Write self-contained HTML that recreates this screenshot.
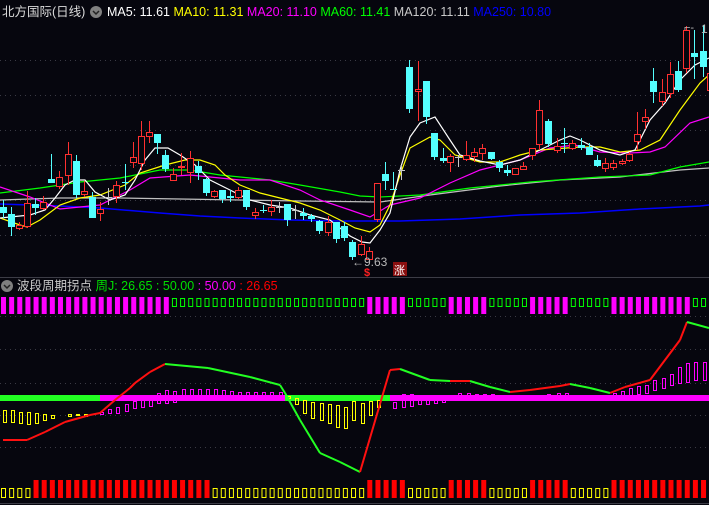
<!DOCTYPE html>
<html><head><meta charset="utf-8"><style>
html,body{margin:0;padding:0;background:#06060e;width:709px;height:505px;overflow:hidden}
svg{display:block}
text{font-family:"Liberation Sans","Noto Sans CJK SC",sans-serif}
</style></head><body>
<svg id="s" width="709" height="505" xmlns="http://www.w3.org/2000/svg">
<rect width="709" height="505" fill="#06060e"/>
<g id="grid" stroke="#3a3a44" stroke-dasharray="1 4" stroke-width="1"></g>
<line x1="0" y1="277.5" x2="709" y2="277.5" stroke="#3c3c46"/>
<line x1="0" y1="503.5" x2="709" y2="503.5" stroke="#3c3c46"/>
<g id="ma" fill="none" stroke-width="1.2"></g>
<g id="cd"></g>
<g id="low"></g>
<text x="352" y="266" fill="#b8b8b8" font-size="12">←9.63</text>
<text x="364" y="276" fill="#ff2020" font-size="11" font-weight="bold">$</text>
<rect x="393" y="262" width="14" height="14" fill="#8a1010"/>
<text x="394" y="274" fill="#fff" font-size="11">涨</text>
<text x="684" y="31" fill="#b8b8b8" font-size="11">⌐-</text>
<text x="701" y="33" fill="#b8b8b8" font-size="12">1</text>
<rect x="0" y="0" width="709" height="22" fill="#06060e"/>
<text x="2" y="16" font-size="12.5" fill="#dcdcdc">北方国际(日线)</text>
<circle cx="96" cy="12" r="6" fill="#808080"/><path d="M93 11 L96 14 L99 11" stroke="#222" stroke-width="1.5" fill="none"/>
<text x="107" y="16" font-size="12.5"><tspan fill="#ffffff">MA5: 11.61 </tspan><tspan fill="#ffff00">MA10: 11.31 </tspan><tspan fill="#ff00ff">MA20: 11.10 </tspan><tspan fill="#00ff00">MA60: 11.41 </tspan><tspan fill="#c8c8c8">MA120: 11.11 </tspan><tspan fill="#0000ff">MA250: 10.80</tspan></text>
<circle cx="7" cy="286" r="6" fill="#808080"/><path d="M4 285 L7 288 L10 285" stroke="#222" stroke-width="1.5" fill="none"/>
<text x="17" y="290" font-size="12.5"><tspan fill="#c8c8c8">波段周期拐点 </tspan><tspan fill="#00e000">周J: 26.65 : 50.00 </tspan><tspan fill="#ff00ff">: 50.00 </tspan><tspan fill="#ff0000">: 26.65</tspan></text>
</svg>
<script>
(function(){
var NS="http://www.w3.org/2000/svg";
function el(p,t,a){var e=document.createElementNS(NS,t);for(var k in a)e.setAttribute(k,a[k]);document.getElementById(p).appendChild(e);return e;}
[60,95,130,165,200,235,316,349,383,415,447].forEach(function(y){el("grid","line",{x1:0,y1:y+.5,x2:709,y2:y+.5});});
function pl(g,pts,c,w){el(g,"polyline",{points:pts.map(function(p){return p.join(",")}).join(" "),stroke:c,"stroke-width":w||1.2,fill:"none"});}
pl("ma",[[0,204],[60,206],[100,208],[160,213],[200,216],[240,218],[290,220],[340,221],[400,221],[460,219],[520,215],[580,213],[640,209],[700,206],[709,205]],"#0000ff",1.5);
pl("ma",[[0,200],[60,198],[120,198],[180,199],[240,200],[300,201],[380,202],[430,195],[500,186],[560,180],[620,177],[680,170],[709,168]],"#c0c0c0");
pl("ma",[[0,193],[40,188],[80,182],[120,178],[160,170],[190,170],[220,175],[270,180],[300,185],[340,192],[360,196],[380,197],[420,195],[470,188],[530,182],[600,177],[650,175],[680,167],[709,162]],"#00ff00");
pl("ma",[[0,187],[30,197],[60,209],[100,205],[130,190],[150,178],[190,175],[240,180],[270,180],[300,190],[320,200],[350,210],[370,217],[390,205],[420,198],[450,183],[480,170],[520,160],[550,148],[575,145],[600,152],[630,153],[650,152],[665,147],[690,123],[709,117]],"#ff00ff");
pl("ma",[[0,218],[20,225],[27,227],[40,220],[60,205],[80,198],[100,195],[125,185],[140,173],[165,165],[185,160],[200,160],[215,165],[225,175],[240,185],[260,193],[280,198],[300,203],[320,210],[340,220],[355,228],[370,232],[380,225],[390,205],[400,175],[410,148],[430,137],[440,140],[455,155],[480,162],[500,162],[520,155],[540,150],[580,147],[600,147],[620,152],[640,150],[660,140],[680,110],[700,83],[709,75]],"#ffff00");
pl("ma",[[0,218],[30,215],[45,210],[55,198],[65,185],[75,180],[85,180],[95,192],[110,200],[125,195],[135,180],[145,160],[155,148],[168,148],[180,155],[195,165],[210,180],[230,190],[250,200],[270,205],[290,208],[310,215],[330,220],[350,236],[362,242],[370,243],[380,230],[390,213],[400,170],[410,137],[420,123],[435,117],[450,140],[460,155],[480,161],[500,165],[520,160],[540,150],[560,140],[570,136],[580,140],[600,150],[620,155],[635,150],[650,120],[665,103],[680,80],[695,65],[709,58]],"#ffffff");
var C=[[3,207,213,200,218,"c"],[11,214,227,207,236,"c"],[19,225,228,222,230,"r"],[27,203,226,191,228,"r"],[35,204,208,198,215,"c"],[43,202,208,196,210,"r"],[51,179,183,154,183,"c"],[59,177,186,171,189,"r"],[68,154,175,142,185,"r"],[76,161,195,155,198,"c"],[84,191,194,181,197,"r"],[92,197,218,192,218,"c"],[100,209,213,202,221,"r"],[108,197,198,188,205,"x"],[116,185,196,181,203,"r"],[125,182,183,164,190,"c"],[133,157,162,142,168,"r"],[141,136,163,121,170,"r"],[149,132,136,121,143,"r"],[157,134,143,134,154,"c"],[165,155,169,150,172,"c"],[173,174,180,168,181,"r"],[181,166,167,153,175,"r"],[190,158,172,151,183,"r"],[198,166,173,161,180,"c"],[206,179,193,178,196,"c"],[214,191,196,190,198,"r"],[222,190,199,190,203,"c"],[230,196,198,190,202,"c"],[238,190,197,187,199,"r"],[246,190,207,190,210,"c"],[255,212,215,208,219,"r"],[263,210,211,205,213,"c"],[271,207,211,200,216,"r"],[279,207,208,202,213,"x"],[287,204,220,204,226,"c"],[295,210,211,205,219,"x"],[303,213,216,208,220,"c"],[311,216,219,214,222,"c"],[319,221,231,220,234,"c"],[328,222,232,216,236,"r"],[336,222,239,222,243,"c"],[344,226,238,222,241,"c"],[352,242,257,240,260,"c"],[361,244,254,236,256,"r"],[369,251,259,247,262,"r"],[377,183,219,183,222,"r"],[385,174,181,162,190,"c"],[393,189,190,172,190,"c"],[401,170,171,165,180,"x"],[409,67,109,60,113,"c"],[418,89,91,61,121,"r"],[426,81,117,81,124,"c"],[434,133,157,133,160,"c"],[443,158,161,148,163,"c"],[450,156,162,154,172,"r"],[458,157,158,155,167,"x"],[466,155,159,141,161,"r"],[474,152,156,148,162,"r"],[482,148,153,144,160,"r"],[491,152,159,152,160,"c"],[499,162,168,160,172,"c"],[507,170,173,165,176,"c"],[515,168,174,168,175,"r"],[523,166,169,162,170,"r"],[532,148,155,148,160,"r"],[539,110,144,100,150,"r"],[548,121,144,119,147,"c"],[557,146,150,138,153,"r"],[564,143,144,128,153,"c"],[572,143,148,140,150,"r"],[581,145,148,138,150,"c"],[589,147,155,143,155,"c"],[597,160,166,155,167,"c"],[605,163,168,158,172,"r"],[613,163,167,160,170,"r"],[622,161,163,159,165,"r"],[629,154,160,152,162,"r"],[637,134,141,112,150,"r"],[645,117,121,109,129,"r"],[653,81,92,68,103,"c"],[662,92,101,79,106,"r"],[670,74,93,62,98,"r"],[678,71,90,61,92,"c"],[686,30,68,26,73,"r"],[694,53,57,30,79,"c"],[703,51,67,25,77,"c"],[710,73,90,66,95,"r"]];
C.forEach(function(c){var x=c[0],col=c[5]=="r"?"#ff3030":c[5]=="c"?"#54ffff":"#c8c8c8";
el("cd","line",{x1:x+.5,y1:c[3],x2:x+.5,y2:c[4],stroke:col});
if(c[5]=="r")el("cd","rect",{x:x-2.5,y:c[1]+.5,width:6,height:Math.max(1,c[2]-c[1]),fill:"#06060e",stroke:col});
else if(c[5]=="c")el("cd","rect",{x:x-3,y:c[1],width:7,height:Math.max(1,c[2]-c[1]),fill:col});
else el("cd","line",{x1:x-3,y1:c[1]+.5,x2:x+4,y2:c[1]+.5,stroke:col});});
function seg(i,arr){for(var k=0;k<arr.length;k++)if(i<=arr[k][0])return arr[k][1];return arr[arr.length-1][1];}
var topRow=[[20,1],[44,0],[49,1],[54,0],[59,1],[64,0],[69,1],[74,0],[84,1],[99,0]];
var botRow=[[3,0],[25,1],[44,0],[49,1],[54,0],[59,1],[64,0],[69,1],[74,0],[99,1]];
for(var i=0;i<88;i++){var x=1+i*8.14;
 if(seg(i,topRow))el("low","rect",{x:x,y:297,width:5,height:17,fill:"#ff00ff"});
 else el("low","rect",{x:x+.5,y:298.5,width:4,height:8,fill:"none",stroke:"#00ff00"});
 if(seg(i,botRow))el("low","rect",{x:x,y:480,width:5,height:18,fill:"#ff0000"});
 else el("low","rect",{x:x+.5,y:488.5,width:4,height:9,fill:"none",stroke:"#ffff00"});}
el("low","rect",{x:0,y:395,width:100,height:6,fill:"#22ff22"});
el("low","rect",{x:100,y:395,width:185,height:6,fill:"#ff00ff"});
el("low","rect",{x:285,y:395,width:105,height:6,fill:"#22ff22"});
el("low","rect",{x:390,y:395,width:319,height:6,fill:"#ff00ff"});
var H=[[3,410,422,"y"],[11,410,422,"y"],[19,412,423,"y"],[27,412,424,"y"],[35,413,423,"y"],[43,414,420,"y"],[51,415,418,"y"],[68,414,416,"y"],[76,414,415,"y"],[84,414,416,"y"],
[100,412,414,"m"],[108,409,413,"m"],[116,407,413,"m"],[125,404,411,"m"],[133,401,408,"m"],[141,398,407,"m"],[149,396,406,"m"],[157,393,403,"m"],[165,390,403,"m"],[173,391,402,"m"],[182,389,400,"m"],[190,389,398,"m"],[198,389,398,"m"],[206,389,396,"m"],[214,389,395,"m"],[222,390,395,"m"],[230,391,395,"m"],[238,392,396,"m"],[246,392,395,"m"],[254,392,395,"m"],[262,392,395,"m"],[270,392,395,"m"],[279,392,395,"m"],
[287,396,398,"y"],[295,398,404,"y"],[303,400,413,"y"],[311,402,418,"y"],[320,403,420,"y"],[328,404,423,"y"],[336,405,427,"y"],[344,407,428,"y"],[352,401,420,"y"],[361,403,423,"y"],[369,401,415,"y"],[377,400,407,"y"],
[393,402,408,"m"],[402,394,407,"m"],[410,394,406,"m"],[418,396,404,"m"],[426,396,404,"m"],[434,396,403,"m"],[442,396,402,"m"],[450,395,400,"m"],[458,393,400,"m"],[467,393,400,"m"],[475,394,398,"m"],[483,394,398,"m"],[491,394,397,"m"],[547,394,397,"m"],[557,393,397,"m"],[565,393,397,"m"],[613,393,396,"m"],[621,391,396,"m"],[629,388,396,"m"],[637,386,394,"m"],[645,385,393,"m"],[653,380,390,"m"],[662,378,388,"m"],[670,374,385,"m"],[678,367,383,"m"],[686,363,382,"m"],[694,362,380,"m"],[703,362,380,"m"]];
H.forEach(function(h){el("low","rect",{x:h[0]+.5,y:h[1]+.5,width:3,height:Math.max(1,h[2]-h[1]),fill:"none",stroke:h[3]=="y"?"#ffff00":"#ff00ff"});});
var J=[[3,440],[27,440],[45,432],[65,422],[90,415],[100,413],[115,400],[130,388],[135,383],[150,372],[165,364],[208,368],[250,377],[280,385],[285,393],[300,420],[320,453],[340,462],[360,472],[390,370],[400,369],[430,380],[450,381],[470,381],[490,387],[510,392],[530,390],[560,386],[570,384],[590,388],[610,393],[625,387],[650,380],[680,340],[687,322],[709,328]];
for(var k=0;k<J.length-1;k++){var a=J[k],b=J[k+1];el("low","line",{x1:a[0],y1:a[1],x2:b[0],y2:b[1],stroke:b[1]<=a[1]?"#ff1010":"#22ff22","stroke-width":2});}
})();
</script>
</body></html>
